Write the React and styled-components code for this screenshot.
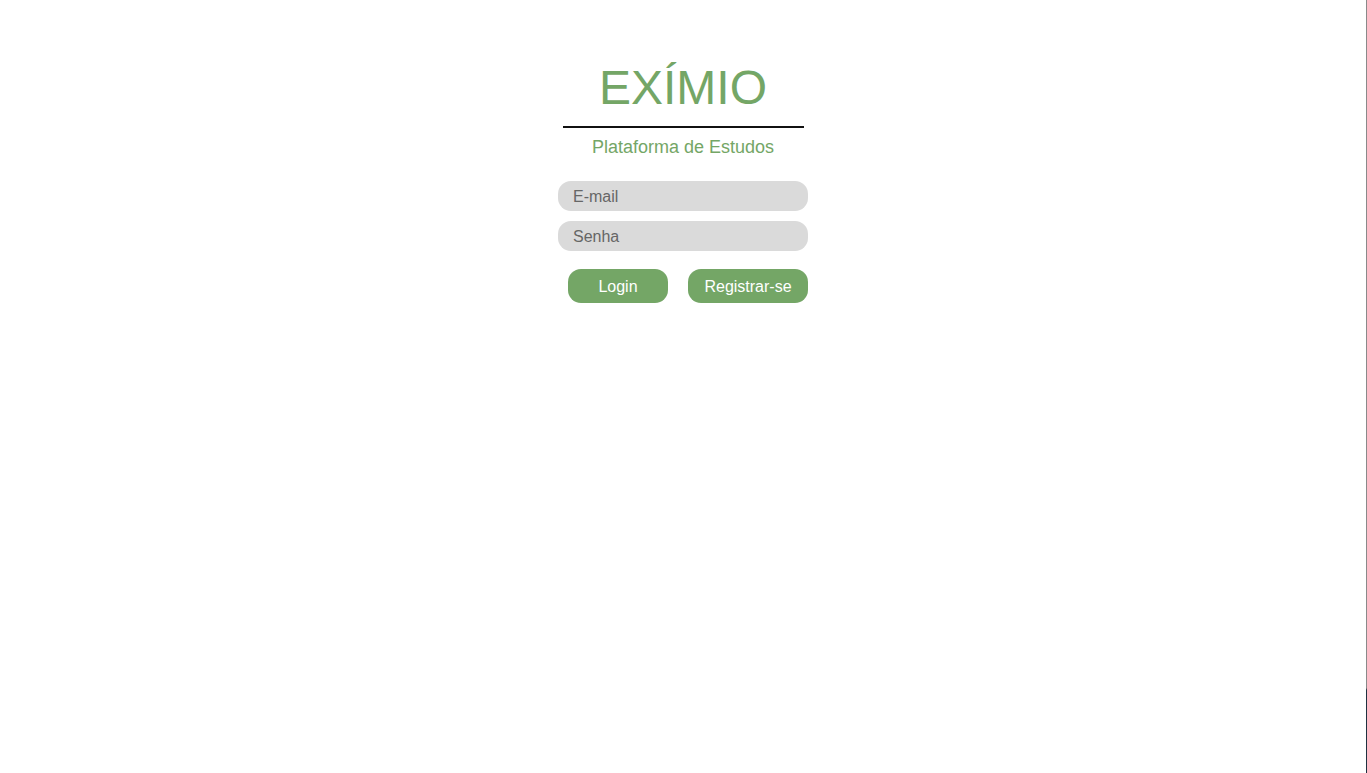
import React from "react";
import styled, { createGlobalStyle } from "styled-components";

const GlobalStyle = createGlobalStyle`
  html, body {
    margin: 0;
    padding: 0;
    background: #ffffff;
    font-family: "Liberation Sans", Arial, sans-serif;
  }
  body::after {
    content: "";
    position: fixed;
    top: 0;
    right: 0;
    width: 1px;
    height: 100vh;
    background: linear-gradient(to bottom, #8a8a8a 0, #8a8a8a 688px, #1f3140 690px, #1f3140 100%);
  }
`;

const Page = styled.main`
  display: flex;
  flex-direction: column;
  align-items: center;
  padding-top: 64px;
  padding-right: 1px;
  min-height: 773px;
  box-sizing: border-box;
`;

const Title = styled.h1`
  margin: 0;
  font-size: 48px;
  line-height: 48px;
  font-weight: 400;
  color: #74a666;
`;

const Rule = styled.hr`
  margin: 14px 0 0;
  width: 241px;
  height: 2px;
  border: 0;
  background: #111111;
`;

const Subtitle = styled.p`
  margin: 10px 0 0;
  font-size: 18px;
  line-height: 18px;
  color: #74a666;
`;

const Form = styled.form`
  display: flex;
  flex-direction: column;
  gap: 10px;
  width: 250px;
  margin-top: 25px;
`;

const Input = styled.input`
  box-sizing: border-box;
  width: 250px;
  height: 30px;
  padding: 2px 15px 0;
  border: 0;
  border-radius: 13px;
  background: #dadada;
  font-family: "Liberation Sans", Arial, sans-serif;
  font-size: 16px;
  color: #666666;
  outline: none;
  &::placeholder {
    color: #666666;
    opacity: 1;
  }
`;

const Actions = styled.div`
  display: flex;
  gap: 20px;
  padding-left: 10px;
  margin-top: 8px;
`;

const Button = styled.button`
  width: ${(p) => p.$w}px;
  height: 34px;
  border: 0;
  border-radius: 13px;
  background: #74a666;
  color: #ffffff;
  font-family: "Liberation Sans", Arial, sans-serif;
  font-size: 16px;
  padding: 2px 0 0;
  cursor: pointer;
`;

export default function App() {
  return (
    <>
      <GlobalStyle />
      <Page>
        <Title>EXÍMIO</Title>
        <Rule />
        <Subtitle>Plataforma de Estudos</Subtitle>
        <Form onSubmit={(e) => e.preventDefault()}>
          <Input type="email" placeholder="E-mail" />
          <Input type="password" placeholder="Senha" />
          <Actions>
            <Button type="submit" $w={100}>Login</Button>
            <Button type="button" $w={120}>Registrar-se</Button>
          </Actions>
        </Form>
      </Page>
    </>
  );
}
